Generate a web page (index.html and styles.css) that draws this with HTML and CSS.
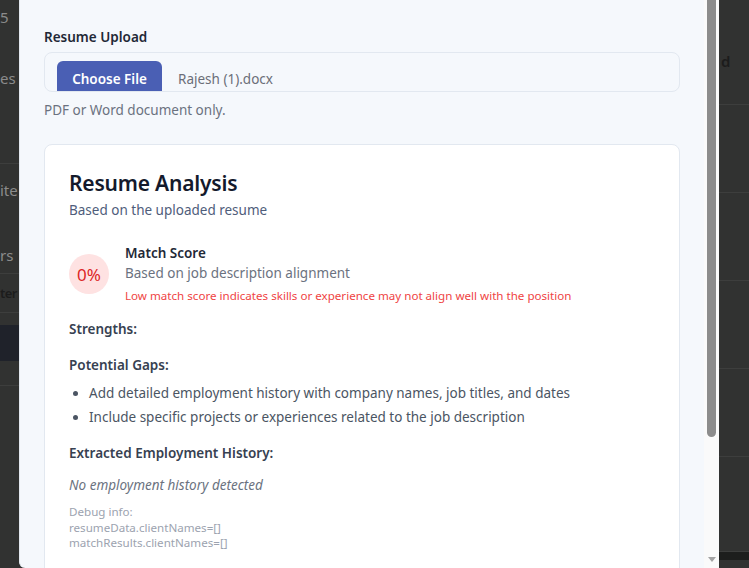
FILE: index.html
```html
<!DOCTYPE html>
<html lang="en">
<head>
<meta charset="utf-8">
<title>Resume Analysis</title>
<link rel="stylesheet" href="styles.css">
</head>
<body>
<div class="page">
  <div class="side side-left">
    <div class="brow r1"><span class="dim">5</span></div>
    <div class="brow r2"><span class="dim">es</span></div>
    <div class="brow r3 line"></div>
    <div class="brow r4"><span class="dim">ite</span></div>
    <div class="brow r5 line"><span class="dim">rs</span></div>
    <div class="brow r6 line"><span class="dark tight">ter</span></div>
    <div class="brow r7"></div>
    <div class="brow r8"></div>
    <div class="brow r9 line"></div>
  </div>

  <div class="modal">
    <div class="modal-body">
      <div class="field-label">Resume Upload</div>
      <div class="file-box">
        <span class="file-btn">Choose File</span>
        <span class="file-name">Rajesh (1).docx</span>
      </div>
      <div class="hint">PDF or Word document only.</div>

      <div class="card">
        <h2 class="card-title">Resume Analysis</h2>
        <div class="card-sub">Based on the uploaded resume</div>

        <div class="score-row">
          <div class="score-circle">0%</div>
          <div class="score-text">
            <div class="score-title">Match Score</div>
            <div class="score-desc">Based on job description alignment</div>
            <div class="score-warn">Low match score indicates skills or experience may not align well with the position</div>
          </div>
        </div>

        <div class="section-head first">Strengths:</div>
        <div class="section-head">Potential Gaps:</div>
        <ul class="gaps">
          <li>Add detailed employment history with company names, job titles, and dates</li>
          <li>Include specific projects or experiences related to the job description</li>
        </ul>
        <div class="section-head hist">Extracted Employment History:</div>
        <div class="empty">No employment history detected</div>
        <div class="debug">
          <div>Debug info:</div>
          <div>resumeData.clientNames=[]</div>
          <div>matchResults.clientNames=[]</div>
        </div>
      </div>
    </div>
    <div class="scrollbar">
      <div class="thumb"></div>
      <div class="track-fill"></div>
      <div class="arrow"></div>
    </div>
  </div>

  <div class="side side-right">
    <div class="rrow q1"><span class="dark">d</span></div>
    <div class="rrow q2"></div>
    <div class="rrow q2"></div>
    <div class="rrow q2"></div>
    <div class="rrow q2"></div>
    <div class="rrow q3"></div>
    <div class="rbar"></div>
  </div>
</div>
</body>
</html>
```

FILE: styles.css
```css
* { box-sizing: border-box; }
html, body { margin: 0; padding: 0; }
body {
  background: #313231;
  font-family: "Noto Sans", "Open Sans", sans-serif;
  width: 749px;
  height: 568px;
  overflow: hidden;
}
.page {
  display: grid;
  grid-template-columns: 19px 700px 30px;
  height: 568px;
  overflow: hidden;
}

/* backdrop */
.side { overflow: hidden; white-space: nowrap; font-size: 15px; }
.brow { display: flex; align-items: center; }
.line { border-bottom: 1px solid #3d3e3d; }
.dim { color: #8b8b8b; }
.dark { color: #1c1c1c; font-weight: 600; }
.tight { font-size: 13px; letter-spacing: -0.6px; }
.r1 { height: 34px; }
.r2 { height: 88px; }
.r3 { height: 42px; }
.r4 { height: 52px; }
.r5 { height: 58px; padding-top: 20px; }
.r6 { height: 39px; }
.r7 { height: 12px; }
.r8 { height: 36px; background: #1f222a; }
.r9 { height: 25px; }

.side-right { display: flex; flex-direction: column; }
.rrow { border-bottom: 1px solid #3d3e3d; display: flex; align-items: center; padding-left: 2px; }
.q1 { height: 105px; padding-top: 17px; }
.q2 { height: 88px; }
.q3 { height: 95px; }
.rbar { height: 8px; background: #1d1e1d; }

/* modal */
.modal {
  display: flex;
  background: #f5f8fc;
  height: 568px;
  border-left: 1px solid #e3e8ef;
  border-bottom-left-radius: 6px;
  overflow: hidden;
}
.modal-body {
  flex: 1;
  padding: 27px 24px 0 24px;
  overflow: hidden;
}
.field-label {
  font-size: 13.5px;
  line-height: 20px;
  font-weight: 600;
  color: #1f2937;
  margin-bottom: 5px;
}
.file-box {
  height: 40px;
  border: 1px solid #e2e8f0;
  border-radius: 8px;
  display: flex;
  align-items: flex-start;
  padding: 8px 12px 0;
  overflow: hidden;
}
.file-btn {
  width: 105px;
  height: 36px;
  background: #4a5fb4;
  color: #fff;
  font-weight: 600;
  font-size: 13.5px;
  border-radius: 6px;
  display: flex;
  justify-content: center;
  padding-top: 8px;
  line-height: 20px;
}
.file-name {
  margin-left: 16px;
  font-size: 13.5px;
  line-height: 20px;
  padding-top: 8px;
  color: #6b6e78;
}
.hint {
  margin-top: 8px;
  font-size: 13.5px;
  line-height: 20px;
  color: #6b7280;
}

.card {
  margin-top: 24px;
  background: #fff;
  border: 1px solid #e2e8f0;
  border-radius: 8px;
  padding: 22px 24px 40px;
}
.card-title {
  margin: 0;
  font-size: 21px;
  line-height: 32px;
  font-weight: 600;
  letter-spacing: -0.2px;
  color: #141a2c;
}
.card-sub {
  margin-top: 1px;
  font-size: 13.5px;
  line-height: 20px;
  color: #4f5d7b;
}
.score-row {
  margin-top: 23px;
  display: flex;
  align-items: center;
  gap: 16px;
}
.score-circle {
  width: 40px;
  height: 40px;
  border-radius: 50%;
  background: #fee2e2;
  color: #dc2626;
  font-size: 17px;
  display: flex;
  align-items: center;
  justify-content: center;
  flex-shrink: 0;
}
.score-title {
  font-size: 13.5px;
  line-height: 20px;
  font-weight: 600;
  color: #1f2937;
}
.score-desc {
  font-size: 13.5px;
  line-height: 20px;
  color: #6b7280;
}
.score-warn {
  margin-top: 4px;
  font-size: 11.6px;
  line-height: 18px;
  color: #ef4444;
}
.section-head {
  font-size: 13.5px;
  line-height: 20px;
  font-weight: 600;
  color: #374151;
  margin-top: 16px;
}
.section-head.first { margin-top: 14px; }
.section-head.hist { margin-top: 14px; }
.gaps {
  margin: 6px 0 0;
  padding-left: 20px;
  font-size: 13.5px;
  line-height: 24px;
  color: #4b5563;
}
.empty {
  margin-top: 12px;
  font-size: 13.5px;
  line-height: 20px;
  font-style: italic;
  color: #6b7280;
}
.debug {
  margin-top: 9px;
  font-size: 11.6px;
  line-height: 15.5px;
  color: #9ca3af;
}

/* scrollbar */
.scrollbar {
  width: 15px;
  background: #fafafa;
  display: flex;
  flex-direction: column;
  align-items: center;
  padding-bottom: 6px;
}
.thumb {
  width: 9px;
  height: 437px;
  background: #8c8c8c;
  border-radius: 0 0 5px 5px;
}
.track-fill { flex: 1; }
.arrow {
  width: 0;
  height: 0;
  border-left: 4px solid transparent;
  border-right: 4px solid transparent;
  border-top: 5px solid #a3a3a3;
}
```
